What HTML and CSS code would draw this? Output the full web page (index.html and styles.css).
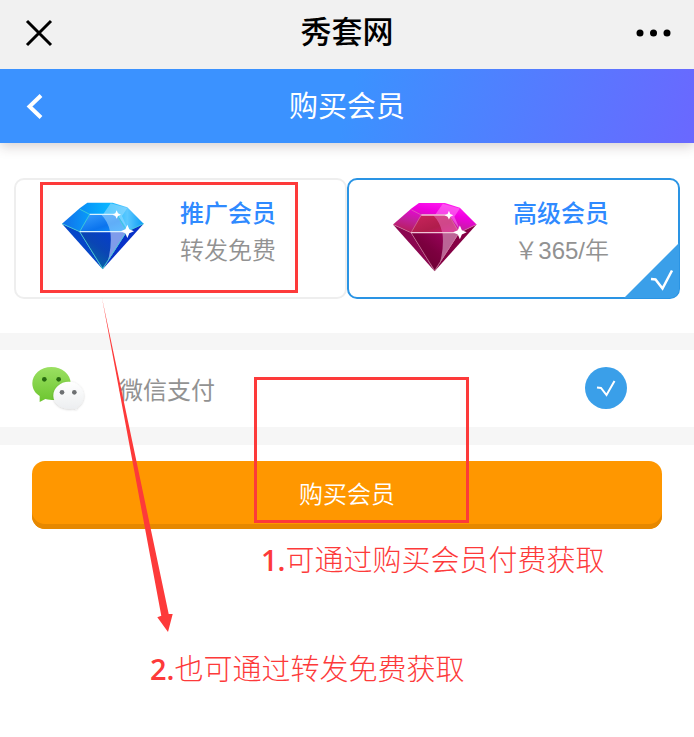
FILE: index.html
```html
<!DOCTYPE html>
<html lang="zh-CN">
<head>
<meta charset="utf-8">
<meta name="viewport" content="width=device-width, initial-scale=1">
<title>购买会员</title>
<link rel="stylesheet" href="styles.css">
</head>
<body>
<svg class="defs" aria-hidden="true">
  <defs>
    <linearGradient id="b-crown" x1="0" y1="0" x2="1" y2="0"><stop offset="0" stop-color="#126fe8"/><stop offset=".35" stop-color="#079dfb"/><stop offset=".58" stop-color="#0bb6ff"/><stop offset=".8" stop-color="#5cc8ff"/><stop offset="1" stop-color="#0a9cf5"/></linearGradient>
    <linearGradient id="b-table" x1="0" y1="0" x2="1" y2="1"><stop offset="0" stop-color="#3ba0ff"/><stop offset=".6" stop-color="#0b74ee"/><stop offset="1" stop-color="#0c98ff"/></linearGradient>
    <linearGradient id="b-base" x1="1" y1="0" x2="0" y2="1"><stop offset="0" stop-color="#0338d8"/><stop offset=".5" stop-color="#0a45b4"/><stop offset="1" stop-color="#047b9b"/></linearGradient>
    <linearGradient id="p-crown" x1="0" y1="1" x2=".6" y2="0"><stop offset="0" stop-color="#b51c45"/><stop offset=".4" stop-color="#c0209a"/><stop offset=".75" stop-color="#f000e0"/><stop offset="1" stop-color="#ff18ef"/></linearGradient>
    <linearGradient id="p-table" x1="0" y1="0" x2="1" y2="1"><stop offset="0" stop-color="#cb255d"/><stop offset=".6" stop-color="#b01d4c"/><stop offset="1" stop-color="#cc1276"/></linearGradient>
    <linearGradient id="p-base" x1="1" y1="0" x2="0" y2="1"><stop offset="0" stop-color="#a80468"/><stop offset=".5" stop-color="#7c003f"/><stop offset="1" stop-color="#65002c"/></linearGradient>
    <linearGradient id="w-green" x1="0" y1="0" x2="0" y2="1"><stop offset="0" stop-color="#9be062"/><stop offset="1" stop-color="#6cc52f"/></linearGradient>
    <linearGradient id="w-white" x1="0" y1="0" x2="0" y2="1"><stop offset="0" stop-color="#ffffff"/><stop offset="1" stop-color="#eceef0"/></linearGradient>
    <filter id="w-shadow" x="-20%" y="-20%" width="140%" height="140%"><feDropShadow dx="0" dy="2" stdDeviation="3" flood-color="#000" flood-opacity=".22"/></filter>
  </defs>
</svg>

<div class="page">
  <div class="topbar">
    <button class="icon-btn" type="button" aria-label="关闭">
      <svg width="32" height="28" viewBox="0 0 32 28"><path d="M5 2 29 26M29 2 5 26" fill="none" stroke="#000" stroke-width="3"/></svg>
    </button>
    <span class="site">秀套网</span>
    <button class="icon-btn end" type="button" aria-label="更多">
      <svg width="36" height="8" viewBox="0 0 36 8"><circle cx="4" cy="4" r="3.5"/><circle cx="17.500" cy="4" r="3.5"/><circle cx="31" cy="4" r="3.5"/></svg>
    </button>
  </div>

  <header class="header">
    <a class="back" href="#" aria-label="返回">
      <svg width="20" height="26" viewBox="0 0 20 26"><path d="M17 1.500 5.500 12.500 17 23.500" fill="none" stroke="#fff" stroke-width="4"/></svg>
    </a>
    <h1>购买会员</h1>
  </header>

  <main>
    <div class="plans">
      <label class="plan">
        <input class="hidden-input" type="radio" name="plan">
        <svg class="gem" viewBox="60 32 264 252" aria-hidden="true">
          <path fill="url(#b-crown)" d="M142 70H218L262 84 311 133 260 157H119L66 133 120 86Z"/>
          <path fill="#8fd8ff" opacity=".65" d="M212 72 262 86 246 110 264 152 230 104 190 104Z"/>
          <path fill="url(#b-table)" d="M149 105H230L262 156H119Z"/>
          <path fill="#a8dcff" opacity=".55" d="M184 106H230L262 156H210Q204 126 184 106Z"/>
          <path fill="#0646c8" d="M66 133 119 157 188 270Z"/>
          <path fill="#0831c8" d="M311 133 260 157 188 270Z"/>
          <path fill="url(#b-base)" d="M119 157H260L188 270Z"/>
          <path fill="#8da6ee" opacity=".9" d="M211 157H260L203 246Q216 202 211 157Z"/>
          <path fill="none" stroke="#43d5d2" stroke-width="3" opacity=".8" d="M120 90 149 105 119 157 66 133M119 157 188 268 260 157 311 133M230 105 260 157"/>
          <path stroke="#d8f2ff" stroke-width="4" d="M119 157H260M149 105H230"/>
          <path fill="#fff" d="M230 93 234 102 243 106 234 110 230 118 226 110 217 106 226 102ZM262 136 268 150 282 156 268 162 262 176 256 162 242 156 256 150Z"/>
        </svg>
        <span class="plan-text"><strong>推广会员</strong><span class="price">转发免费</span></span>
      </label>

      <label class="plan selected">
        <input class="hidden-input" type="radio" name="plan" checked>
        <svg class="gem" viewBox="66 32 258 246" aria-hidden="true">
          <path fill="url(#p-crown)" d="M142 70H218L262 84 311 133 260 157H119L66 133 120 86Z"/>
          <path fill="#ff8cf4" opacity=".5" d="M212 72 262 86 246 110 264 152 230 104 190 104Z"/>
          <path fill="url(#p-table)" d="M149 105H230L262 156H119Z"/>
          <path fill="#e96abb" opacity=".55" d="M184 106H230L262 156H210Q204 126 184 106Z"/>
          <path fill="#8b0750" d="M66 133 119 157 188 270Z"/>
          <path fill="#850044" d="M311 133 260 157 188 270Z"/>
          <path fill="url(#p-base)" d="M119 157H260L188 270Z"/>
          <path fill="#c0709d" opacity=".9" d="M211 157H260L203 246Q216 202 211 157Z"/>
          <path fill="none" stroke="#dc8fac" stroke-width="2" opacity=".8" d="M120 90 149 105 119 157 66 133M119 157 188 268 260 157 311 133M230 105 260 157"/>
          <path stroke="#f0c4d6" stroke-width="4" d="M119 157H260M149 105H230"/>
          <path fill="#fff" d="M230 93 234 102 243 106 234 110 230 118 226 110 217 106 226 102ZM262 136 268 150 282 156 268 162 262 176 256 162 242 156 256 150Z"/>
        </svg>
        <span class="plan-text"><strong>高级会员</strong><span class="price">￥365/年</span></span>
        <svg class="corner" viewBox="0 0 55 55" aria-hidden="true"><path fill="#3a9fe9" d="M55 0V55H0Z"/><path d="M27 36 31.500 36.500 38.500 45.500 48 27.500" fill="none" stroke="#fff" stroke-width="2.500"/></svg>
      </label>
    </div>

    <label class="pay">
      <svg class="wechat" viewBox="90 138 168 141" aria-hidden="true">
        <path fill="url(#w-green)" d="M154 144C122 144 97 166 97 193 97 209 105 223 119 231L119 249 136 240C198 254 212 218 212 193 212 166 186 144 154 144Z"/>
        <circle cx="133" cy="181" r="7" fill="#276a10"/><circle cx="176" cy="181" r="7" fill="#276a10"/>
        <path fill="url(#w-white)" filter="url(#w-shadow)" d="M206 188C181 188 160 207 160 230 160 256 190 274 220 268L229 271 233 263C244 256 251 244 251 230 251 207 231 188 206 188Z"/>
        <circle cx="186" cy="220" r="7" fill="#6d7072"/><circle cx="223" cy="220" r="7" fill="#6d7072"/>
      </svg>
      <span class="pay-name">微信支付</span>
      <span class="tick">
        <input type="radio" name="pay" checked>
        <svg viewBox="0 0 42 42" aria-hidden="true"><path d="M12 20.500 16 21 21.500 28 29.500 14" fill="none" stroke="#fff" stroke-width="2"/></svg>
      </span>
    </label>

    <div class="action"><button class="buy" type="button">购买会员</button></div>

    <p class="note first"><b>1.</b>可通过购买会员付费获取</p>
    <p class="note second"><b>2.</b>也可通过转发免费获取</p>
  </main>

  <svg class="marks" width="694" height="737" viewBox="0 0 694 737" aria-hidden="true">
    <g fill="none" stroke="#fd3a3a" stroke-width="3"><rect x="41.500" y="183.500" width="255" height="108"/><rect x="255.500" y="378.500" width="212" height="143"/></g>
    <path fill="#fd3a3a" d="M102 298 168.700 614 172.700 614 168 632 157.300 617.300 161.300 615.700Z"/>
  </svg>
</div>
</body>
</html>
```
FILE: styles.css
```css
* { box-sizing: border-box; }

body {
  margin: 0;
  background: #fff;
  font-family: "Liberation Sans", "Noto Sans CJK SC", sans-serif;
  font-size: 24px;
  color: #000;
}

button { font-family: inherit; border: 0; cursor: pointer; }

.defs { position: absolute; width: 0; height: 0; }

.page { position: relative; min-height: 100vh; }

.topbar {
  position: relative;
  z-index: 1;
  display: grid;
  grid-template-columns: 1fr auto 1fr;
  align-items: center;
  height: 69px;
  padding: 0 22px 4px;
  background: #f1f1f1;
}
.site { font-size: 31px; line-height: 40px; font-weight: 500; }
.icon-btn { display: flex; padding: 0; background: none; justify-self: start; }
.icon-btn.end { justify-self: end; }

.header {
  display: grid;
  grid-template-columns: 1fr auto 1fr;
  align-items: center;
  height: 74px;
  padding: 2px 24px 0;
  background: linear-gradient(105deg, #3b92ff 50%, #6a68ff);
  box-shadow: 0 3px 12px rgba(60, 30, 30, .22);
  color: #fff;
}
.header h1 { margin: 0; font-size: 29px; line-height: 40px; font-weight: 400; }
.back { display: flex; justify-self: start; }

.plans {
  display: grid;
  grid-template-columns: 1fr 1fr;
  padding: 35px 14px 34px;
}
.plan {
  position: relative;
  display: flex;
  align-items: center;
  gap: 32px;
  padding: 10px 0 23px 44px;
  border: 2px solid #eee;
  border-radius: 10px;
  cursor: pointer;
}
.plan.selected { border-color: #2a94e4; }
.hidden-input { position: absolute; opacity: 0; margin: 0; }
.gem { width: 88px; height: 84px; flex: none; }
.plan-text { display: grid; line-height: 37px; text-align: right; }
.plan-text strong { color: #2f8aff; font-weight: 500; }
.price { color: #929292; font-weight: 350; }
.corner { position: absolute; right: -1px; bottom: -1px; width: 55px; height: 55px; border-bottom-right-radius: 9px; }

.pay {
  display: flex;
  align-items: center;
  height: 112px;
  padding: 0 67px 1px 30px;
  border: solid #f6f6f6;
  border-width: 17px 0 18px;
  cursor: pointer;
}
.wechat { width: 56px; height: 47px; margin-right: 33px; }
.pay-name { flex: 1; color: #929292; }
.tick { display: grid; width: 42px; height: 42px; }
.tick > * { grid-area: 1 / 1; }
.tick input { appearance: none; margin: 0; border-radius: 50%; background: #3a9fe9; }
.tick svg { pointer-events: none; }

.action { padding: 16px 32px 0; }
.buy {
  display: block;
  width: 100%;
  height: 68px;
  padding: 0 0 6px;
  border-radius: 13px;
  background: #ff9700;
  box-shadow: inset 0 -5px #e68800;
  color: #fff;
  font-size: 24px;
  font-weight: 350;
}

.note {
  margin: 0;
  color: #fd3a3a;
  font-family: "Open Sans", "Noto Sans CJK SC", sans-serif;
  font-size: 29px;
  line-height: 40px;
  font-weight: 300;
}
.note b { font-weight: 600; }
.note.first { padding: 11px 0 0 261px; }
.note.second { padding: 69px 0 0 150px; }

.marks { position: absolute; top: 0; left: 0; z-index: 2; pointer-events: none; }
```
